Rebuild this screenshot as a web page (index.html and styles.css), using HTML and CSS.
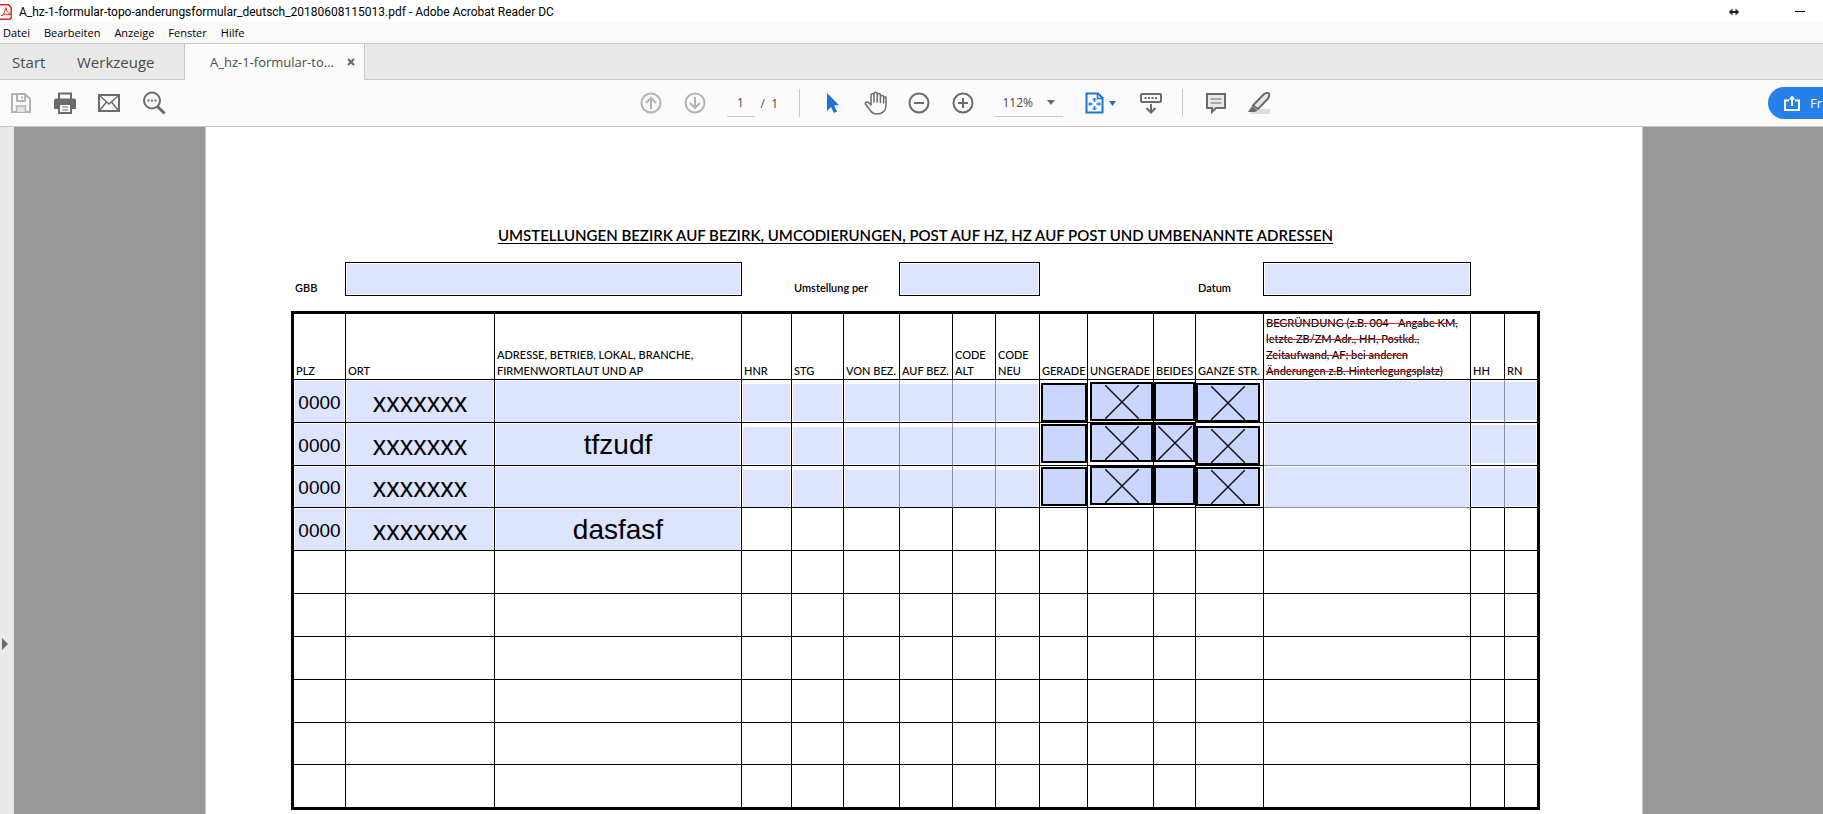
FILE: index.html
```html
<!DOCTYPE html>
<html lang="de">
<head>
<meta charset="utf-8">
<title>A_hz-1-formular-topo-anderungsformular_deutsch_20180608115013.pdf - Adobe Acrobat Reader DC</title>
<link rel="stylesheet" href="styles.css">
</head>
<body>
<header class="titlebar">
  <svg class="app-icon" width="12" height="16" viewBox="0 0 12 16" aria-hidden="true"><path d="M0 .8h8.500l2.700 2.700v9.700q0 2-2 2H0" fill="#fff" stroke="#e2231a" stroke-width="1.500"/><path d="M2 11.500C4 10 5.300 7 5.300 4.500c0-1.200 1-1.200 1 0C6.300 7 8 9 10 9.500c1 .5.200 1.300-1 1C6.500 9.800 4.500 10 2.500 11.300c-1 .7-1.300.3-.5-.5" fill="none" stroke="#e2231a"/></svg>
  <span class="window-title">A_hz-1-formular-topo-anderungsformular_deutsch_20180608115013.pdf - Adobe Acrobat Reader DC</span>
  <button class="win-btn" aria-label="Fenster verbreitern"><svg width="12" height="8" viewBox="0 0 12 8"><path d="M3 4h6" stroke="#222" stroke-width="2"/><path d="M4.500 .5v7L.8 4zM7.500 .5v7L11.200 4z" fill="#222"/></svg></button>
  <button class="win-btn win-min" aria-label="Minimieren"><svg width="10" height="8" viewBox="0 0 10 8"><path d="M0 3.500h10" stroke="#000"/></svg></button>
</header>
<nav class="menubar">
  <button>Datei</button><button>Bearbeiten</button><button>Anzeige</button><button>Fenster</button><button>Hilfe</button>
</nav>
<nav class="tabs">
  <button class="tab tab-start">Start</button>
  <button class="tab tab-tools">Werkzeuge</button>
  <div class="doc-tab"><button class="doc-name">A_hz-1-formular-to...</button><button class="close" aria-label="Tab schließen"><svg width="8" height="8" viewBox="0 0 8 8"><path d="M1 1l6 6M7 1L1 7" stroke="#666" stroke-width="2"/></svg></button></div>
</nav>
<div class="toolbar">
  <div class="file-tools">
    <button aria-label="Speichern"><svg width="22" height="22" viewBox="0 0 22 22" fill="none" stroke="#b3b3b3" stroke-width="2"><path d="M2 2h13l5 5v13H2z"/><path d="M7 2v7h8V2"/><path d="M12 4v3" stroke-width="1.500"/><path d="M6.500 20v-6h9v6" fill="#e4e4e4" stroke-width="1.500"/></svg></button>
    <button aria-label="Drucken"><svg width="22" height="22" viewBox="0 0 22 22"><path d="M5 7V1.500h12V7" fill="none" stroke="#6b6b6b" stroke-width="2"/><path d="M2 6.500h18q2 0 2 2V17h-4v-5H4v5H0V8.500q0-2 2-2z" fill="#6b6b6b"/><path d="M5 12h12v9H5z" fill="#fbfbfb" stroke="#6b6b6b" stroke-width="2"/><path d="M8 15h6M8 18h6" stroke="#6b6b6b"/></svg></button>
    <button aria-label="Per E-Mail senden"><svg width="22" height="22" viewBox="0 0 22 22" fill="none" stroke="#6b6b6b"><path d="M1 3h20v16H1z" stroke-width="2"/><path d="M2 4l9 8 9-8M2 18l6.500-8M20 18l-6.500-8" stroke-width="1.500"/></svg></button>
    <button aria-label="Suchen"><svg width="24" height="24" viewBox="0 0 24 24" fill="none" stroke="#6b6b6b"><circle cx="10" cy="9.500" r="8" stroke-width="2"/><path d="M15.500 15.500l7 7" stroke-width="3"/><path d="M5.500 9.500h2M9 9.500h2M12.500 9.500h2" stroke-width="2"/></svg></button>
  </div>
  <div class="view-tools">
    <button aria-label="Vorherige Seite"><svg width="22" height="22" viewBox="0 0 22 22" fill="none" stroke="#b3b3b3" stroke-width="2"><circle cx="11" cy="11" r="9.500"/><path d="M11 17V6M6 11l5-5 5 5"/></svg></button>
    <button class="gap-22" aria-label="Nächste Seite"><svg width="22" height="22" viewBox="0 0 22 22" fill="none" stroke="#b3b3b3" stroke-width="2"><circle cx="11" cy="11" r="9.500"/><path d="M11 5v11M6 11l5 5 5-5"/></svg></button>
    <input class="page-no" type="text" value="1" aria-label="Seite"><span class="page-total">/&nbsp; 1</span>
    <span class="rule"></span>
    <button class="gap-26" aria-label="Auswahl"><svg width="14" height="22" viewBox="0 0 14 22"><path d="M1 1l12 12-5 .5 3 6-3 1.500-3-6-4 4z" fill="#1b74d0"/></svg></button>
    <button class="gap-24" aria-label="Hand"><svg width="24" height="24" viewBox="0 0 24 24" fill="none" stroke="#6b6b6b" stroke-width="1.500" stroke-linejoin="round" stroke-linecap="round"><path d="M7 14V4.500q0-1.700 1.500-1.700T10 4.500V11 3q0-1.700 1.600-1.700T13.200 3v8V4q0-1.500 1.600-1.500T16.400 4v7.500V6q0-1.500 1.600-1.500T19.600 6H22v8q0 9-9.500 9-4 0-6.500-4l-4.500-6q-.6-1.500 1-2 1.500-.3 2.500 1zM19.600 6.500V12"/></svg></button>
    <button class="gap-20" aria-label="Verkleinern"><svg width="22" height="22" viewBox="0 0 22 22" fill="none" stroke="#6b6b6b" stroke-width="2"><circle cx="11" cy="11" r="9.500"/><path d="M6 11h10"/></svg></button>
    <button class="gap-22" aria-label="Vergrößern"><svg width="22" height="22" viewBox="0 0 22 22" fill="none" stroke="#6b6b6b" stroke-width="2"><circle cx="11" cy="11" r="9.500"/><path d="M6 11h10M11 6v10"/></svg></button>
    <span class="zoom"><select aria-label="Zoom"><option>112%</option></select><svg width="8" height="5" viewBox="0 0 8 5" aria-hidden="true"><path d="M0 0h8L4 5z" fill="#6b6b6b"/></svg></span>
    <button class="gap-22 fit" aria-label="Seitenanzeige"><svg width="19" height="22" viewBox="0 0 19 22" fill="none" stroke="#1b74d0"><path d="M1.500 1.500H13l4.500 4.500v14.500h-16z" stroke-width="2"/><path d="M12.500 1.500V6.500h5" stroke-width="1.500"/><path d="M9.500 6v4M9.500 14v4M4 12h3.500M11.500 12H15" stroke-width="1.500"/><path d="M7.500 8l2-2 2 2M7.500 16l2 2 2-2M5.500 10l-2 2 2 2M13.500 10l2 2-2 2"/></svg><svg width="7" height="5" viewBox="0 0 7 5"><path d="M0 0h7L3.500 5z" fill="#1b74d0"/></svg></button>
    <button class="gap-24" aria-label="Bildlauf"><svg width="22" height="22" viewBox="0 0 22 22" fill="none" stroke="#6b6b6b" stroke-width="2"><rect x="1" y="2" width="20" height="8" rx="1"/><path d="M4.500 6h13" stroke-dasharray="2 1.500"/><path d="M11 12v8M6.500 16l4.500 4.500 4.500-4.500"/></svg></button>
    <span class="rule"></span>
    <button class="gap-22" aria-label="Kommentar"><svg width="22" height="22" viewBox="0 0 22 22"><path d="M2 2h18v14h-9l-4 4v-4H2z" fill="#e8e8e8" stroke="#6b6b6b" stroke-width="2"/><path d="M5.500 7h11M5.500 11h11" stroke="#6b6b6b"/></svg></button>
    <button class="gap-20" aria-label="Markieren"><svg width="24" height="22" viewBox="0 0 24 22"><path d="M7 17h16v5H3z" fill="#dedede"/><path d="M6 13.500L16.500 2.500q4-3 5.500-1 1 2-1 5L11 17z" fill="#e8e8e8" stroke="#6b6b6b" stroke-width="2"/><path d="M5 14l5.500 4.500L8 20H1z" fill="#6b6b6b"/></svg></button>
  </div>
  <button class="share" aria-label="Freigeben"><svg width="16" height="17" viewBox="0 0 16 17" fill="none" stroke="#fff" stroke-width="2"><path d="M5 5.500H1V15h14V5.500h-4"/><path d="M8 11V2" /><path d="M4.500 4.500L8 .500l3.500 4z" fill="#fff" stroke="none"/></svg>Fr</button>
</div>
<main class="viewer">
  <aside class="side"><button aria-label="Navigationsfenster einblenden"><svg width="6" height="12" viewBox="0 0 6 12"><path d="M0 0l6 6-6 6z" fill="#6b6b6b"/></svg></button></aside>
  <section class="canvas">
    <form class="sheet">
      <h1>UMSTELLUNGEN BEZIRK AUF BEZIRK, UMCODIERUNGEN, POST AUF HZ, HZ AUF POST UND UMBENANNTE ADRESSEN</h1>
      <div class="head-fields">
        <label class="l-gbb" for="gbb">GBB</label><input class="f-gbb" id="gbb" type="text">
        <label class="l-per" for="per">Umstellung per</label><input class="f-per" id="per" type="text">
        <label class="l-date" for="date">Datum</label><input class="f-date" id="date" type="text">
      </div>
      <table>
        <colgroup><col class="c-plz"><col class="c-ort"><col><col class="c-hnr"><col class="c-stg"><col class="c-von"><col class="c-auf"><col class="c-alt"><col class="c-neu"><col class="c-ger"><col class="c-ung"><col class="c-bei"><col class="c-gan"><col class="c-why"><col class="c-hh"><col class="c-rn"></colgroup>
        <thead>
          <tr><th>PLZ</th><th>ORT</th><th>ADRESSE, BETRIEB, LOKAL, BRANCHE,<br>FIRMENWORTLAUT UND AP</th><th>HNR</th><th>STG</th><th>VON BEZ.</th><th>AUF BEZ.</th><th>CODE<br>ALT</th><th>CODE<br>NEU</th><th>GERADE</th><th>UNGERADE</th><th>BEIDES</th><th>GANZE STR.</th><th><s>BEGRÜNDUNG (z.B. 004 - Angabe KM,<br>letzte ZB/ZM Adr., HH, Postkd.,<br>Zeitaufwand, AF; bei anderen<br>Änderungen z.B. Hinterlegungsplatz)</s></th><th>HH</th><th>RN</th></tr>
        </thead>
        <tbody>
          <tr>
            <td class="field plz"><input type="text" aria-label="PLZ 1" value="0000"></td>
            <td class="field ort"><input type="text" aria-label="Ort 1" value="xxxxxxx"></td>
            <td class="field adr"><input type="text" aria-label="Adresse 1"></td>
            <td class="field low"><input type="text" aria-label="HNR 1"></td>
            <td class="field low"><input type="text" aria-label="STG 1"></td>
            <td class="field low joined"><input type="text" aria-label="Von Bez. 1"></td>
            <td class="field low joined"><input type="text" aria-label="Auf Bez. 1"></td>
            <td class="field low joined"><input type="text" aria-label="Code alt 1"></td>
            <td class="field low"><input type="text" aria-label="Code neu 1"></td>
            <td class="check narrow drop-3"><input type="checkbox" aria-label="Gerade 1"></td>
            <td class="check wide drop-2"><input type="checkbox" aria-label="Ungerade 1" checked></td>
            <td class="check drop-2"><input type="checkbox" aria-label="Beides 1"></td>
            <td class="check street drop-3"><input type="checkbox" aria-label="Ganze Str. 1" checked></td>
            <td class="field"><input type="text" aria-label="Begründung 1"></td>
            <td class="field high joined"><input type="text" aria-label="HH 1"></td>
            <td class="field high"><input type="text" aria-label="RN 1"></td>
          </tr>
          <tr>
            <td class="field plz"><input type="text" aria-label="PLZ 2" value="0000"></td>
            <td class="field ort"><input type="text" aria-label="Ort 2" value="xxxxxxx"></td>
            <td class="field adr"><input type="text" aria-label="Adresse 2" value="tfzudf"></td>
            <td class="field low"><input type="text" aria-label="HNR 2"></td>
            <td class="field low"><input type="text" aria-label="STG 2"></td>
            <td class="field low joined"><input type="text" aria-label="Von Bez. 2"></td>
            <td class="field low joined"><input type="text" aria-label="Auf Bez. 2"></td>
            <td class="field low joined"><input type="text" aria-label="Code alt 2"></td>
            <td class="field low"><input type="text" aria-label="Code neu 2"></td>
            <td class="check narrow drop-1"><input type="checkbox" aria-label="Gerade 2"></td>
            <td class="check wide"><input type="checkbox" aria-label="Ungerade 2" checked></td>
            <td class="check"><input type="checkbox" aria-label="Beides 2" checked></td>
            <td class="check street drop-3"><input type="checkbox" aria-label="Ganze Str. 2" checked></td>
            <td class="field under"><input type="text" aria-label="Begründung 2"></td>
            <td class="field high joined"><input type="text" aria-label="HH 2"></td>
            <td class="field high"><input type="text" aria-label="RN 2"></td>
          </tr>
          <tr class="short">
            <td class="field plz"><input type="text" aria-label="PLZ 3" value="0000"></td>
            <td class="field ort"><input type="text" aria-label="Ort 3" value="xxxxxxx"></td>
            <td class="field adr"><input type="text" aria-label="Adresse 3"></td>
            <td class="field low"><input type="text" aria-label="HNR 3"></td>
            <td class="field low"><input type="text" aria-label="STG 3"></td>
            <td class="field low joined"><input type="text" aria-label="Von Bez. 3"></td>
            <td class="field low joined"><input type="text" aria-label="Auf Bez. 3"></td>
            <td class="field low joined"><input type="text" aria-label="Code alt 3"></td>
            <td class="field low"><input type="text" aria-label="Code neu 3"></td>
            <td class="check narrow drop-1"><input type="checkbox" aria-label="Gerade 3"></td>
            <td class="check wide"><input type="checkbox" aria-label="Ungerade 3" checked></td>
            <td class="check"><input type="checkbox" aria-label="Beides 3"></td>
            <td class="check street drop-1"><input type="checkbox" aria-label="Ganze Str. 3" checked></td>
            <td class="field under"><input type="text" aria-label="Begründung 3"></td>
            <td class="field high joined"><input type="text" aria-label="HH 3"></td>
            <td class="field high"><input type="text" aria-label="RN 3"></td>
          </tr>
          <tr>
            <td class="field plz"><input type="text" aria-label="PLZ 4" value="0000"></td>
            <td class="field ort"><input type="text" aria-label="Ort 4" value="xxxxxxx"></td>
            <td class="field adr"><input type="text" aria-label="Adresse 4" value="dasfasf"></td>
            <td></td><td></td><td></td><td></td><td></td><td></td><td></td><td></td><td></td><td></td><td></td><td></td><td></td>
          </tr>
          <tr><td></td><td></td><td></td><td></td><td></td><td></td><td></td><td></td><td></td><td></td><td></td><td></td><td></td><td></td><td></td><td></td></tr>
          <tr><td></td><td></td><td></td><td></td><td></td><td></td><td></td><td></td><td></td><td></td><td></td><td></td><td></td><td></td><td></td><td></td></tr>
          <tr><td></td><td></td><td></td><td></td><td></td><td></td><td></td><td></td><td></td><td></td><td></td><td></td><td></td><td></td><td></td><td></td></tr>
          <tr><td></td><td></td><td></td><td></td><td></td><td></td><td></td><td></td><td></td><td></td><td></td><td></td><td></td><td></td><td></td><td></td></tr>
          <tr class="short"><td></td><td></td><td></td><td></td><td></td><td></td><td></td><td></td><td></td><td></td><td></td><td></td><td></td><td></td><td></td><td></td></tr>
          <tr class="short"><td></td><td></td><td></td><td></td><td></td><td></td><td></td><td></td><td></td><td></td><td></td><td></td><td></td><td></td><td></td><td></td></tr>
        </tbody>
      </table>
    </form>
  </section>
</main>
</body>
</html>
```

FILE: styles.css
```css
* { box-sizing: border-box; }
body {
  margin: 0;
  height: 100vh;
  display: flex;
  flex-direction: column;
  overflow: hidden;
  background: #fff;
  color: #000;
  font: 12px "Open Sans", "Noto Sans", sans-serif;
}
button {
  display: flex;
  align-items: center;
  flex: none;
  margin: 0;
  padding: 0;
  border: 0;
  background: none;
  color: inherit;
  font: inherit;
}
input, select { border-radius: 0; font: inherit; color: inherit; margin: 0; }
svg { display: block; flex: none; }

/* window chrome */
.titlebar { display: flex; align-items: center; height: 23px; padding-right: 18px; }
.window-title { margin-left: 7px; flex: 1; white-space: nowrap; font-family: Roboto, "Open Sans", sans-serif; }
.win-min { margin-left: 55px; }
.menubar {
  display: flex;
  align-items: center;
  gap: 14px;
  height: 21px;
  padding: 0 0 2px 3px;
  font-size: 11px;
  background: #fafafa;
  border-bottom: 1px solid #c8c8c8;
}
.tabs {
  display: flex;
  height: 36px;
  background: #e9e9e9;
  color: #4b4b4b;
  font-size: 15px;
}
.tab { border-bottom: 1px solid #c8c8c8; }
.tab-start { padding-left: 12px; width: 77px; }
.tab-tools { width: 107px; }
.doc-tab {
  display: flex;
  align-items: center;
  width: 181px;
  padding-left: 25px;
  background: #fbfbfb;
  border: solid #c8c8c8;
  border-width: 0 1px;
  font-size: 13px;
}
.close { margin-left: 13px; }
.tabs::after { content: ""; flex: 1; border-bottom: 1px solid #c8c8c8; }

/* toolbar */
.toolbar {
  display: flex;
  align-items: center;
  justify-content: space-between;
  height: 47px;
  background: #fbfbfb;
  border-bottom: 1px solid #c8c8c8;
}
.file-tools { display: flex; align-items: center; gap: 22px; padding-left: 10px; }
.view-tools { display: flex; align-items: center; color: #4b4b4b; }
.gap-20 { margin-left: 20px; }
.gap-22 { margin-left: 22px; }
.gap-24 { margin-left: 24px; }
.gap-26 { margin-left: 26px; }
.page-no {
  width: 28px;
  height: 28px;
  margin-left: 21px;
  padding: 0;
  border: 0;
  border-bottom: 1px solid #c8c8c8;
  background: none;
  text-align: center;
}
.page-total { margin-left: 6px; width: 18px; white-space: nowrap; }
.rule { width: 1px; height: 28px; margin-left: 20px; background: #c8c8c8; }
.zoom {
  display: flex;
  align-items: center;
  width: 68px;
  height: 28px;
  margin-left: 21px;
  border-bottom: 1px solid #c8c8c8;
}
.zoom select { appearance: none; width: 52px; padding: 0 0 0 8px; border: 0; background: none; }
.fit { gap: 5px; }
.share {
  gap: 10px;
  width: 55px;
  height: 32px;
  margin-left: 24px;
  padding-left: 16px;
  border-radius: 16px 0 0 16px;
  background: #2680eb;
  color: #fff;
  font-size: 13px;
}

/* document area */
.viewer { display: flex; flex: 1; min-height: 0; }
.side { width: 14px; padding: 511px 0 0 2px; background: #e9e9e9; }
.canvas { flex: 1; padding: 0 180px 0 191px; background: #999; }
.sheet {
  height: 100%;
  padding: 96px 102px 0 85px;
  background: #fff;
  border: solid #c8c8c8;
  border-width: 0 1px;
  font-family: Lato, "Open Sans", sans-serif;
  font-weight: 600;
}
h1 {
  margin: 0;
  text-align: center;
  font-size: 15px;
  font-weight: 600;
  line-height: 24px;
  white-space: nowrap;
  text-decoration: underline 1px;
  text-underline-offset: 2px;
  text-decoration-skip-ink: none;
}
.head-fields {
  display: flex;
  align-items: flex-end;
  margin: 15px 69px 15px 0;
  font-size: 11px;
  line-height: 16px;
}
.head-fields label { flex: none; }
.head-fields input {
  height: 34px;
  padding: 1px;
  border: 1px solid #000;
  background: #dce4ff content-box;
}
.l-gbb { width: 54px; padding-left: 4px; }
.f-gbb { flex: 1; min-width: 0; }
.l-per { width: 157px; padding-left: 52px; }
.f-per { width: 141px; }
.l-date { width: 223px; padding-left: 158px; }
.f-date { width: 208px; }

table {
  width: 100%;
  table-layout: fixed;
  border-collapse: separate;
  border-spacing: 0;
  border: 3px solid #000;
}
.c-plz { width: 52px; }
.c-ort { width: 149px; }
.c-hnr { width: 50px; }
.c-stg { width: 52px; }
.c-von { width: 56px; }
.c-auf { width: 53px; }
.c-alt { width: 43px; }
.c-neu { width: 44px; }
.c-ger { width: 48px; }
.c-ung { width: 66px; }
.c-bei { width: 42px; }
.c-gan { width: 68px; }
.c-why { width: 207px; }
.c-hh { width: 34px; }
.c-rn { width: 32px; }
th {
  height: 66px;
  padding: 0 0 0 2px;
  border: solid #000;
  border-width: 0 1px 1px 0;
  vertical-align: bottom;
  text-align: left;
  font-size: 11px;
  font-weight: 500;
  line-height: 16px;
  white-space: nowrap;
}
th s { text-decoration: line-through #e01b2c 1px; }
td {
  height: 43px;
  padding: 0;
  border: solid #000;
  border-width: 0 1px 1px 0;
  vertical-align: top;
}
.short td { height: 42px; }
th:last-child, td:last-child { border-right: 0; }
tr:last-child td { border-bottom: 0; }

.field { padding: 1px 1px 0; }
.field input {
  display: block;
  width: 100%;
  height: 41px;
  padding: 0;
  border: 0;
  background: #dce4ff;
  text-align: center;
  font-family: "Liberation Sans", Arial, sans-serif;
  font-weight: 400;
}
.short .field input { height: 40px; }
.plz input { font-size: 19px; padding-top: 2px; }
.ort input { font-size: 27px; padding-top: 3px; }
.adr input { font-size: 28px; }
.low { padding-top: 4px; }
.low input, .short .low input { height: 37px; }
.high { padding-top: 2px; }
.high input, .short .high input { height: 38px; }
.joined { padding-right: 0; border-right-color: #8890b0; }
.joined + .field { padding-left: 0; }
.under { border-bottom-color: #8890b0; }

.check input {
  display: block;
  appearance: none;
  width: 100%;
  height: 39px;
  border: 2px solid #000;
  background: #cbd6ff;
}
.check input:checked {
  background:
    linear-gradient(45deg, transparent 48%, #111 49%, #111 51%, transparent 52%) center / 34px 34px no-repeat,
    linear-gradient(-45deg, transparent 48%, #111 49%, #111 51%, transparent 52%) center / 34px 34px no-repeat,
    #cbd6ff;
}
.narrow { padding-left: 1px; }
.wide { padding-left: 2px; }
.street { padding-right: 3px; }
.drop-1 { padding-top: 1px; }
.drop-2 { padding-top: 2px; }
.drop-3 { padding-top: 3px; }
```
